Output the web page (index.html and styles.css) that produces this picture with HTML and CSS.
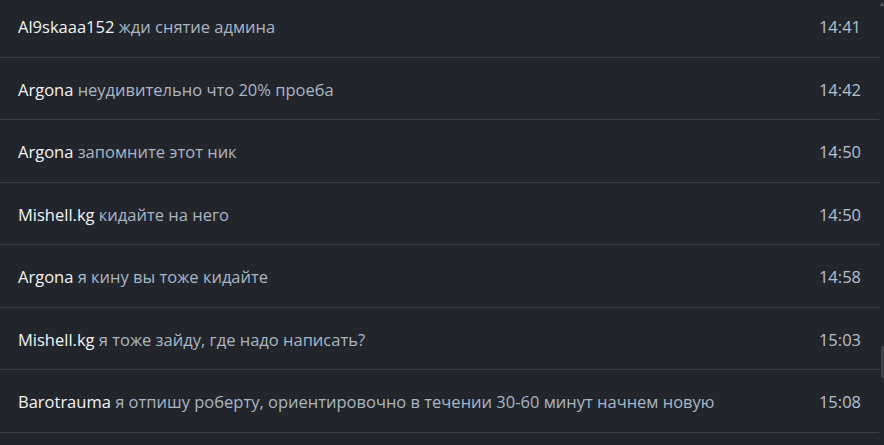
FILE: index.html
```html
<!DOCTYPE html>
<html lang="ru">
<head>
<meta charset="utf-8">
<link rel="stylesheet" href="styles.css">
</head>
<body>
<div class="frame">
  <div class="list">
    <div class="row"><span class="msg"><span class="name">Al9skaaa152</span> жди снятие админа</span><span class="time">14:41</span></div>
    <div class="row"><span class="msg"><span class="name">Argona</span> неудивительно что 20% проеба</span><span class="time">14:42</span></div>
    <div class="row"><span class="msg"><span class="name">Argona</span> запомните этот ник</span><span class="time">14:50</span></div>
    <div class="row"><span class="msg"><span class="name">Mishell.kg</span> кидайте на него</span><span class="time">14:50</span></div>
    <div class="row"><span class="msg"><span class="name">Argona</span> я кину вы тоже кидайте</span><span class="time">14:58</span></div>
    <div class="row"><span class="msg"><span class="name">Mishell.kg</span> я тоже зайду, где надо написать?</span><span class="time">15:03</span></div>
    <div class="row"><span class="msg"><span class="name">Barotrauma</span> я отпишу роберту, ориентировочно в течении 30-60 минут начнем новую</span><span class="time">15:08</span></div>
    <div class="row"><span class="msg"></span><span class="time"></span></div>
  </div>
  <div class="scrollbar">
    <div class="arrow"></div>
    <div class="thumb"></div>
  </div>
</div>
</body>
</html>
```
FILE: styles.css
```css
html, body {
  margin: 0;
  padding: 0;
  background: #22252c;
  overflow: hidden;
}
.frame {
  display: flex;
  width: 884px;
  height: 445px;
  overflow: hidden;
}
.list {
  flex: 1;
  margin-top: -5px;
}
.row {
  box-sizing: border-box;
  height: 62.5px;
  border-bottom: 1px solid #393c44;
  display: flex;
  align-items: center;
  justify-content: space-between;
  padding: 2px 18px 0 18px;
  font-family: "Open Sans", "Noto Sans", sans-serif;
  font-size: 16.5px;
  color: #a9b6c4;
}
.name {
  color: #f2f3f5;
}
.time {
  color: #b4c0cc;
}
.scrollbar {
  width: 5px;
  display: flex;
  flex-direction: column;
  align-items: flex-end;
}
.arrow {
  width: 0;
  height: 0;
  border-left: 2px solid transparent;
  border-right: 2px solid transparent;
  border-bottom: 4px solid #555a63;
  margin-top: 2px;
}
.thumb {
  width: 3px;
  height: 32px;
  margin-top: 340px;
  background: #3c3f46;
  border-radius: 1px;
}
```
